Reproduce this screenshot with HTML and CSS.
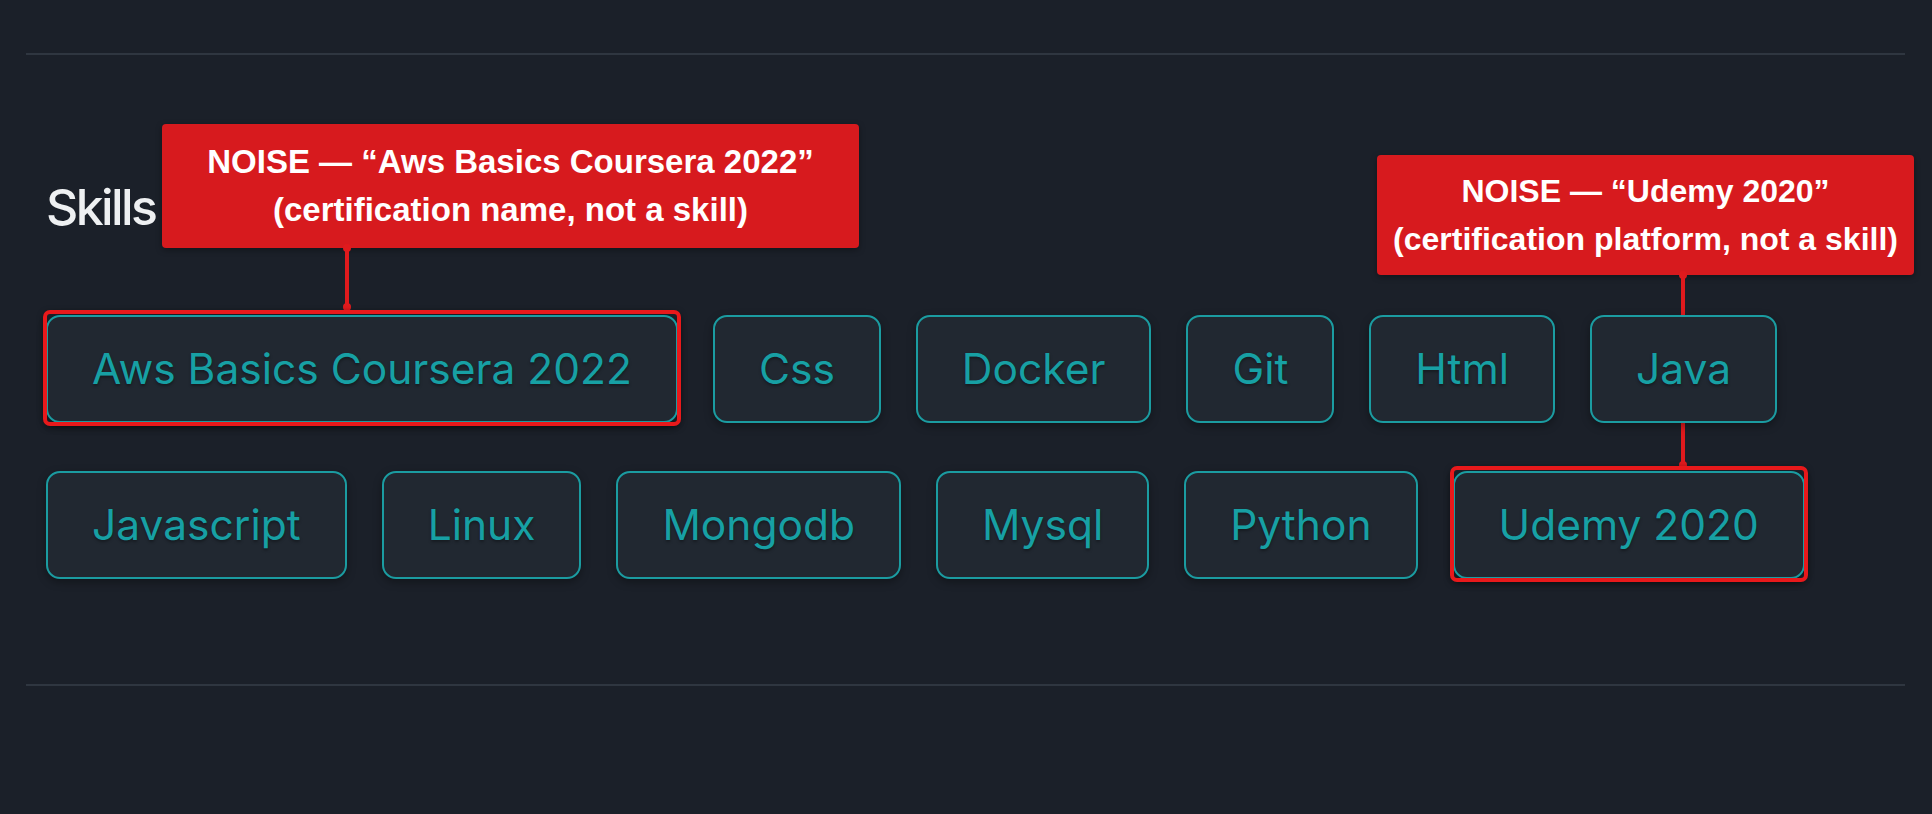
FILE: index.html
```html
<!DOCTYPE html>
<html lang="en">
<head>
    <meta charset="UTF-8">
    <meta name="viewport" content="width=device-width, initial-scale=1.0">
    <title>Skills</title>
    <link rel="stylesheet" href="styles.css">
</head>
<body>

<div class="page">
    <hr class="rule rule--top">

    <section class="skills">
        <h2 class="skills-title">Skills</h2>
        <ul class="skill-list">
            <li class="skill-tag is-flagged">Aws Basics Coursera 2022</li>
            <li class="skill-tag">Css</li>
            <li class="skill-tag">Docker</li>
            <li class="skill-tag">Git</li>
            <li class="skill-tag">Html</li>
            <li class="skill-tag">Java</li>
            <li class="skill-tag">Javascript</li>
            <li class="skill-tag">Linux</li>
            <li class="skill-tag">Mongodb</li>
            <li class="skill-tag">Mysql</li>
            <li class="skill-tag">Python</li>
            <li class="skill-tag is-flagged">Udemy 2020</li>
        </ul>
    </section>

    <hr class="rule rule--bottom">

    <!-- review notes pinned over the tag list -->
    <div class="note note--cert">
        NOISE — “Aws Basics Coursera 2022”<br>
        (certification name, not a skill)
        <span class="note-link"></span>
    </div>
    <div class="note note--platform">
        NOISE — “Udemy 2020”<br>
        (certification platform, not a skill)
        <span class="note-link"></span>
    </div>
</div>

</body>
</html>
```

FILE: styles.css
```css
html, body {
    margin: 0;
    background-color: #1b2029;
}
.page {
    position: relative;
    height: 814px;
    padding: 0 27px 0 26px;
    box-sizing: border-box;
    font-family: "Liberation Sans", Arial, sans-serif;
}
.rule {
    margin: 0;
    height: 2px;
    border: 0;
    background-color: #2f3640;
}
.rule--top {
    position: relative;
    top: 53px;
}
.skills {
    padding: 175px 20px 0 20px;
}
.skills-title {
    margin: 0;
    font-family: Inter, "Liberation Sans", sans-serif;
    font-weight: 500;
    font-size: 50px;
    line-height: 60px;
    letter-spacing: -2.6px;
    color: #eef0f2;
}
.skill-list {
    list-style: none;
    margin: 78px 0 0 0;
    padding: 0;
    display: flex;
    flex-wrap: wrap;
    column-gap: 35px;
    row-gap: 48px;
}
.skill-tag {
    position: relative;
    z-index: 2;
    padding: 26px 44px;
    font-family: Inter, "Liberation Sans", sans-serif;
    font-size: 42.5px;
    line-height: 52px;
    color: #17a0a4;
    background-color: #212831;
    border: 2px solid #1b9ca1;
    border-radius: 14px;
    box-shadow: 0 3px 8px rgba(0, 0, 0, 0.35);
    text-shadow: 0 2px 3px rgba(0, 0, 0, 0.35);
}
.skill-tag.is-flagged::after {
    content: "";
    position: absolute;
    top: -7px;
    left: -5px;
    right: -5px;
    bottom: -5px;
    border: 4px solid #e8191b;
    border-radius: 7px;
    box-shadow: 0 2px 6px rgba(0, 0, 0, 0.4);
}
.rule--bottom {
    margin-top: 105px;
}

.note {
    position: absolute;
    z-index: 1;
    box-sizing: border-box;
    background-color: #d71a1e;
    border-radius: 4px;
    box-shadow: 0 2px 6px rgba(0, 0, 0, 0.35);
    color: #fff;
    font-weight: bold;
    font-size: 33px;
    line-height: 48px;
    text-align: center;
    white-space: nowrap;
}
.note--cert {
    left: 162px;
    top: 124px;
    width: 697px;
    height: 124px;
    padding-top: 14px;
}
.note--platform {
    left: 1377px;
    top: 155px;
    width: 537px;
    height: 120px;
    padding-top: 12px;
    font-size: 32px;
}
.note-link {
    position: absolute;
    top: 100%;
    width: 4px;
    margin-left: -2px;
    background-color: #e01a1d;
}
.note-link::before,
.note-link::after {
    content: "";
    position: absolute;
    left: -2px;
    width: 8px;
    height: 8px;
    border-radius: 50%;
    background-color: #e01a1d;
}
.note-link::before {
    top: -4px;
}
.note-link::after {
    bottom: -4px;
}
.note--cert .note-link {
    left: 185px;
    height: 59px;
}
.note--platform .note-link {
    left: 306px;
    height: 190px;
}
```
